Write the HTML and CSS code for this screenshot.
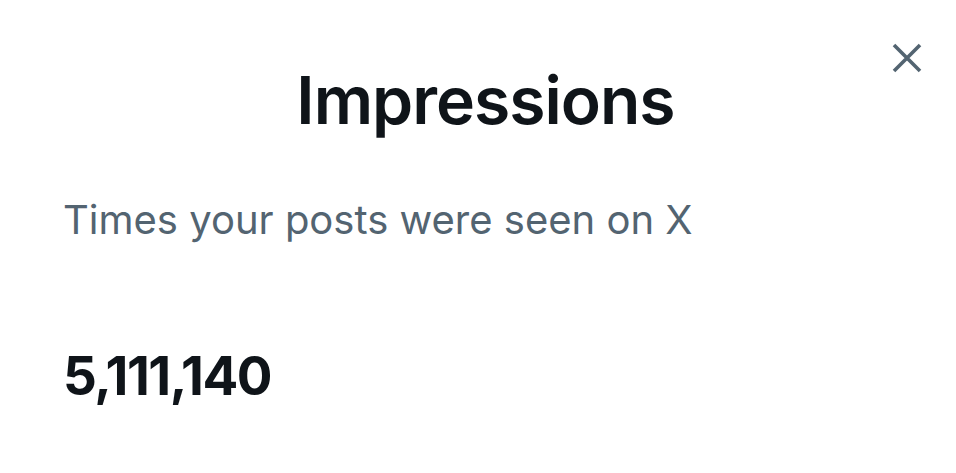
FILE: index.html
```html
<!DOCTYPE html>
<html lang="en">
  <head>
    <meta charset="UTF-8" />
    <meta name="viewport" content="width=device-width, initial-scale=1.0" />
    <title>Impressions</title>
    <link rel="stylesheet" href="styles.css">
  </head>
  <body>
    <div class="sheet">
      <header class="sheet-header">
        <h1 class="sheet-title">Impressions</h1>
        <button class="close-button" aria-label="Close">
          <svg viewBox="0 0 32 32" width="32" height="32">
            <path d="M3 3 L29 29 M29 3 L3 29" stroke="#536471" stroke-width="3.6" fill="none" />
          </svg>
        </button>
      </header>
      <p class="sheet-desc">Times your posts were seen on X</p>
      <p class="sheet-value">5,111,140</p>
    </div>
  </body>
</html>
```

FILE: styles.css
```css
body {
  background-color: white;
  color: #0f1419;
  font-family: Inter, "Noto Sans", sans-serif;
  margin: 0;
  padding: 0;
}
.sheet {
  width: 956px;
  height: 473px;
  padding: 0 63px;
  box-sizing: border-box;
}
.sheet-header {
  position: relative;
  text-align: center;
  padding-top: 62px;
  padding-left: 15px;
}
.sheet-title {
  margin: 0;
  font-size: 66px;
  font-weight: 600;
  line-height: 76px;
  letter-spacing: -1px;
}
.close-button {
  position: absolute;
  top: 42px;
  right: -30px;
  width: 32px;
  height: 32px;
  padding: 0;
  border: none;
  background: none;
  cursor: pointer;
}
.sheet-desc {
  margin: 58px 0 0;
  color: #536471;
  font-size: 40px;
  line-height: 48px;
}
.sheet-value {
  margin: 102px 0 0;
  font-size: 53px;
  font-weight: 700;
  line-height: 60px;
  letter-spacing: -1.5px;
}
```
